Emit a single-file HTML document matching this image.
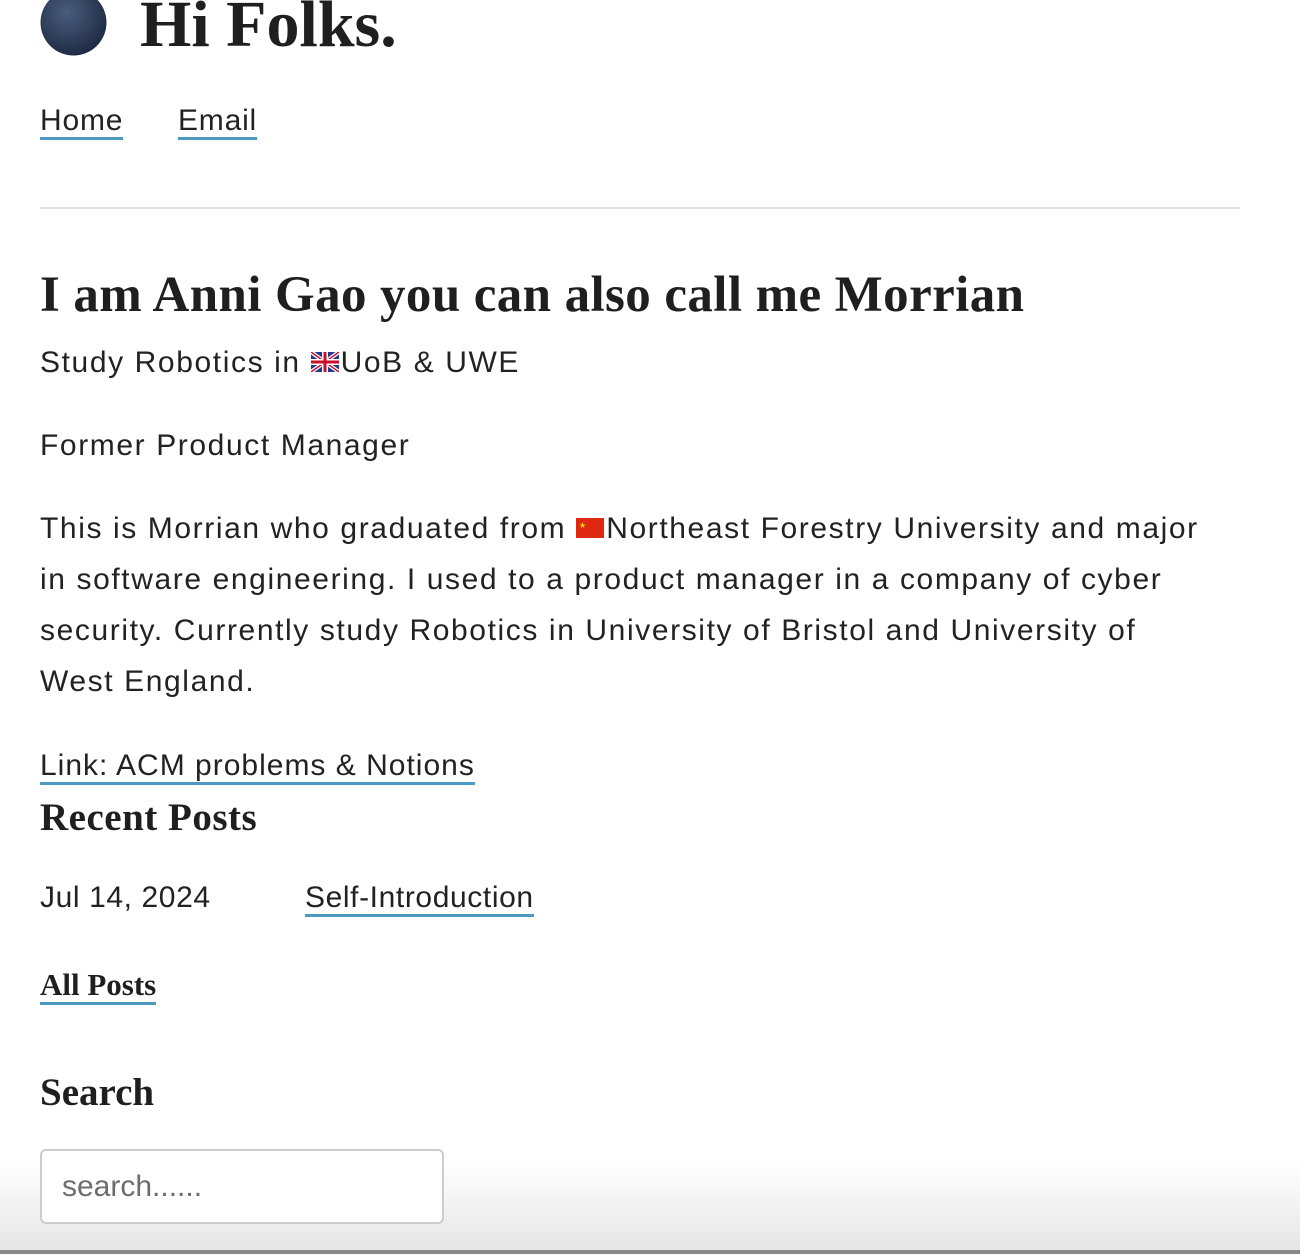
<!DOCTYPE html>
<html><head><meta charset="utf-8"><style>
body{margin:0;width:1300px;height:1254px;overflow:hidden;background:#fff;position:relative;color:#222;font-family:"Liberation Sans",sans-serif}
.a{position:absolute;white-space:nowrap;line-height:1}
.serif{font-family:"Liberation Serif",serif;font-weight:bold;color:#1f1f1f}
.s{font-size:30px;letter-spacing:1.6px}
a{color:#222;text-decoration:none;border-bottom:3px solid #4b9ac3}
.flag{display:inline-block;vertical-align:middle;margin:-4px 2px 0 0}
</style></head><body>
<div style="position:absolute;left:0;top:1160px;width:1300px;height:90px;background:linear-gradient(#fff,#e6e6e6)"></div>
<div style="position:absolute;left:0;top:1250px;width:1300px;height:4px;background:#8a8a8a"></div>
<svg class="a" style="left:40px;top:-11px" width="67" height="67"><defs><radialGradient id="m" cx="40%" cy="35%" r="70%"><stop offset="0" stop-color="#4a5d7e"/><stop offset="1" stop-color="#1c2840"/></radialGradient></defs><circle cx="33.5" cy="33.5" r="33" fill="url(#m)"/></svg>
<div class="a serif" style="left:140px;top:-8px;font-size:66px">Hi Folks.</div>
<div class="a s" style="left:40px;top:106px;letter-spacing:0.8px"><a>Home</a></div>
<div class="a s" style="left:178px;top:106px;letter-spacing:0.8px"><a>Email</a></div>
<div style="position:absolute;left:40px;top:207px;width:1200px;height:2px;background:#e2e2e2"></div>
<div class="a serif" style="left:40px;top:270px;font-size:51px;letter-spacing:0.4px">I am Anni Gao you can also call me Morrian</div>
<div class="a s" style="left:40px;top:348px">Study Robotics in <svg class="flag" width="28" height="20"><rect width="28" height="20" fill="#1f3a8a"/><path d="M0 0L28 20M28 0L0 20" stroke="#fff" stroke-width="4"/><path d="M0 0L28 20M28 0L0 20" stroke="#c8102e" stroke-width="1.5"/><path d="M14 0V20M0 10H28" stroke="#fff" stroke-width="6"/><path d="M14 0V20M0 10H28" stroke="#c8102e" stroke-width="3"/></svg>UoB &amp; UWE</div>
<div class="a s" style="left:40px;top:431px">Former Product Manager</div>
<div class="a s" style="left:40px;top:503px;line-height:51px">This is Morrian who graduated from <svg class="flag" width="28" height="20"><rect width="28" height="20" fill="#de2910"/><text x="3" y="10" font-size="8" fill="#ffde00">★</text></svg>Northeast Forestry University and major<br>in software engineering. I used to a product manager in a company of cyber<br>security. Currently study Robotics in University of Bristol and University of<br>West England.</div>
<div class="a s" style="left:40px;top:751px;letter-spacing:1px"><a>Link: ACM problems &amp; Notions</a></div>
<div class="a serif" style="left:40px;top:798px;font-size:39px;letter-spacing:0.5px">Recent Posts</div>
<div class="a s" style="left:40px;top:883px;letter-spacing:0.6px">Jul 14, 2024</div>
<div class="a s" style="left:305px;top:883px;letter-spacing:0.6px"><a>Self-Introduction</a></div>
<div class="a serif" style="left:40px;top:969px;font-size:31px"><a style="color:#1f1f1f">All Posts</a></div>
<div class="a serif" style="left:40px;top:1073px;font-size:39px">Search</div>
<div style="position:absolute;left:40px;top:1149px;width:400px;height:71px;border:2px solid #ccc;border-radius:6px;background:#fff"></div>
<div class="a s" style="left:62px;top:1172px;color:#6d6d6d;letter-spacing:0">search......</div>
</body></html>
